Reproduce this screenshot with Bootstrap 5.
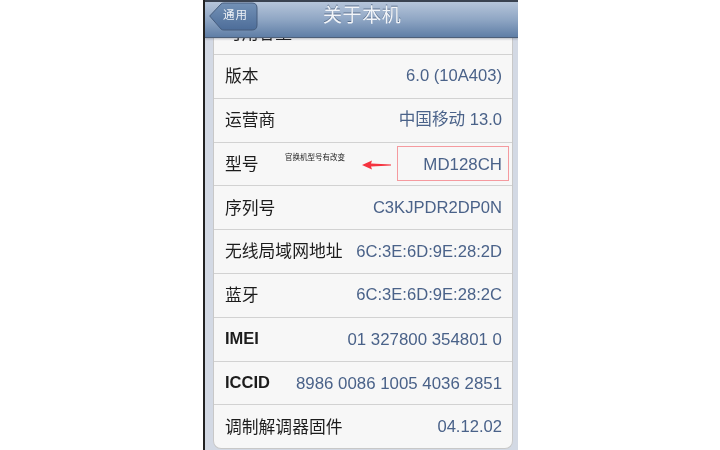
<!DOCTYPE html>
<html lang="zh">
<head>
<meta charset="UTF-8" />
<title>关于本机</title>
<link rel="stylesheet" href="https://cdn.jsdelivr.net/npm/bootstrap@5.3.0/dist/css/bootstrap.min.css" />
<style>
html, body { height: 450px; overflow: hidden; background: #fff; }
body { font-family: "Liberation Sans", "Noto Sans CJK SC", sans-serif; }
.phone { width: 315px; height: 450px; margin-left: 203px; border-left: 2px solid #222; background: #d3d9e4; overflow: hidden; position: relative; filter: blur(.35px); }
.topbar { height: 38px; background: linear-gradient(#b6c5da, #8fa6c4 50%, #5f7ea6); border-top: 2px solid #3a4250; border-bottom: 1px solid #4d5f78; position: relative; z-index: 2; box-shadow: 0 1px 2px rgba(60, 70, 90, .35); }
.topbar-title { font-size: 19px; line-height: 27px; color: #f2f5f9; letter-spacing: .6px; margin-left: 118px; text-shadow: 0 -1px 0 #5a6f8d; }
.back-btn { position: absolute; left: 4px; top: 0; width: 49px; height: 29px; color: #eef2f7; font-size: 11.5px; line-height: 27px; padding-left: 14px; letter-spacing: 1px; }
.back-btn svg { position: absolute; left: 0; top: 0; }
.back-btn span { position: relative; }
.info-group { margin: 0 5px 0 8px; background: #f7f7f7; border: 1px solid #c8c8c8; border-top: 0; border-radius: 0 0 8px 8px; }
.info-row { height: 43.8px; border-bottom: 1px solid #d2d2d2; padding: 1px 10px 0 11px; position: relative; }
.info-row:last-child { height: 42.5px; border-bottom: 0; }
.first-row { height: 17px; overflow: hidden; align-items: flex-end; padding-top: 0; padding-bottom: 8px; }
.row-name { font-size: 16.8px; color: #1c1c1c; }
.row-name-bold { font-size: 16.5px; font-weight: 700; margin-top: -2px; }
.row-value { font-size: 16.6px; color: #4a6289; }
.row-value-wide { font-size: 16.85px; }
.swap-note { position: absolute; left: 71px; top: 9px; font-size: 7.5px; color: #222; white-space: nowrap; }
.swap-arrow { position: absolute; left: 148px; top: 17px; }
.swap-box { position: absolute; right: 3px; top: 3px; width: 112px; height: 35px; border: 1px solid #f59a9f; }
</style>
</head>
<body>
<div class="phone">
  <div class="topbar">
    <div class="back-btn">
      <svg width="49" height="29" viewBox="0 0 49 29"><defs><linearGradient id="backFill" x1="0" y1="0" x2="0" y2="1"><stop offset="0" stop-color="#7391b6"/><stop offset="1" stop-color="#4d6d99"/></linearGradient></defs><path d="M.7 14 L12 2 Q13 1 15 1 H43 Q48 1 48 6 V23 Q48 28 43 28 H15 Q13 28 12 27 Z" fill="url(#backFill)" stroke="#465d7d"/></svg>
      <span>通用</span>
    </div>
    <div class="topbar-title">关于本机</div>
  </div>
  <div class="info-group">
    <div class="info-row first-row d-flex justify-content-between"><span class="row-name">可用容量</span><span class="row-value">4.6 GB</span></div>
    <div class="info-row d-flex justify-content-between align-items-center"><span class="row-name">版本</span><span class="row-value">6.0 (10A403)</span></div>
    <div class="info-row d-flex justify-content-between align-items-center"><span class="row-name">运营商</span><span class="row-value">中国移动 13.0</span></div>
    <div class="info-row d-flex justify-content-between align-items-center">
      <span class="row-name">型号</span>
      <span class="swap-note">官换机型号有改变</span>
      <svg class="swap-arrow" width="30" height="10" viewBox="0 0 30 10"><path d="M0 5 L10 .5 L9 3.5 L29 4.5 V5.5 L9 6.5 L10 9.5 Z" fill="#f5333f"/></svg>
      <span class="swap-box"></span>
      <span class="row-value row-value-wide">MD128CH</span>
    </div>
    <div class="info-row d-flex justify-content-between align-items-center"><span class="row-name">序列号</span><span class="row-value">C3KJPDR2DP0N</span></div>
    <div class="info-row d-flex justify-content-between align-items-center"><span class="row-name">无线局域网地址</span><span class="row-value">6C:3E:6D:9E:28:2D</span></div>
    <div class="info-row d-flex justify-content-between align-items-center"><span class="row-name">蓝牙</span><span class="row-value">6C:3E:6D:9E:28:2C</span></div>
    <div class="info-row d-flex justify-content-between align-items-center"><span class="row-name row-name-bold">IMEI</span><span class="row-value row-value-wide">01 327800 354801 0</span></div>
    <div class="info-row d-flex justify-content-between align-items-center"><span class="row-name row-name-bold">ICCID</span><span class="row-value row-value-wide">8986 0086 1005 4036 2851</span></div>
    <div class="info-row d-flex justify-content-between align-items-center"><span class="row-name">调制解调器固件</span><span class="row-value">04.12.02</span></div>
  </div>
</div>
<script src="https://cdn.jsdelivr.net/npm/bootstrap@5.3.0/dist/js/bootstrap.bundle.min.js"></script>
</body>
</html>
